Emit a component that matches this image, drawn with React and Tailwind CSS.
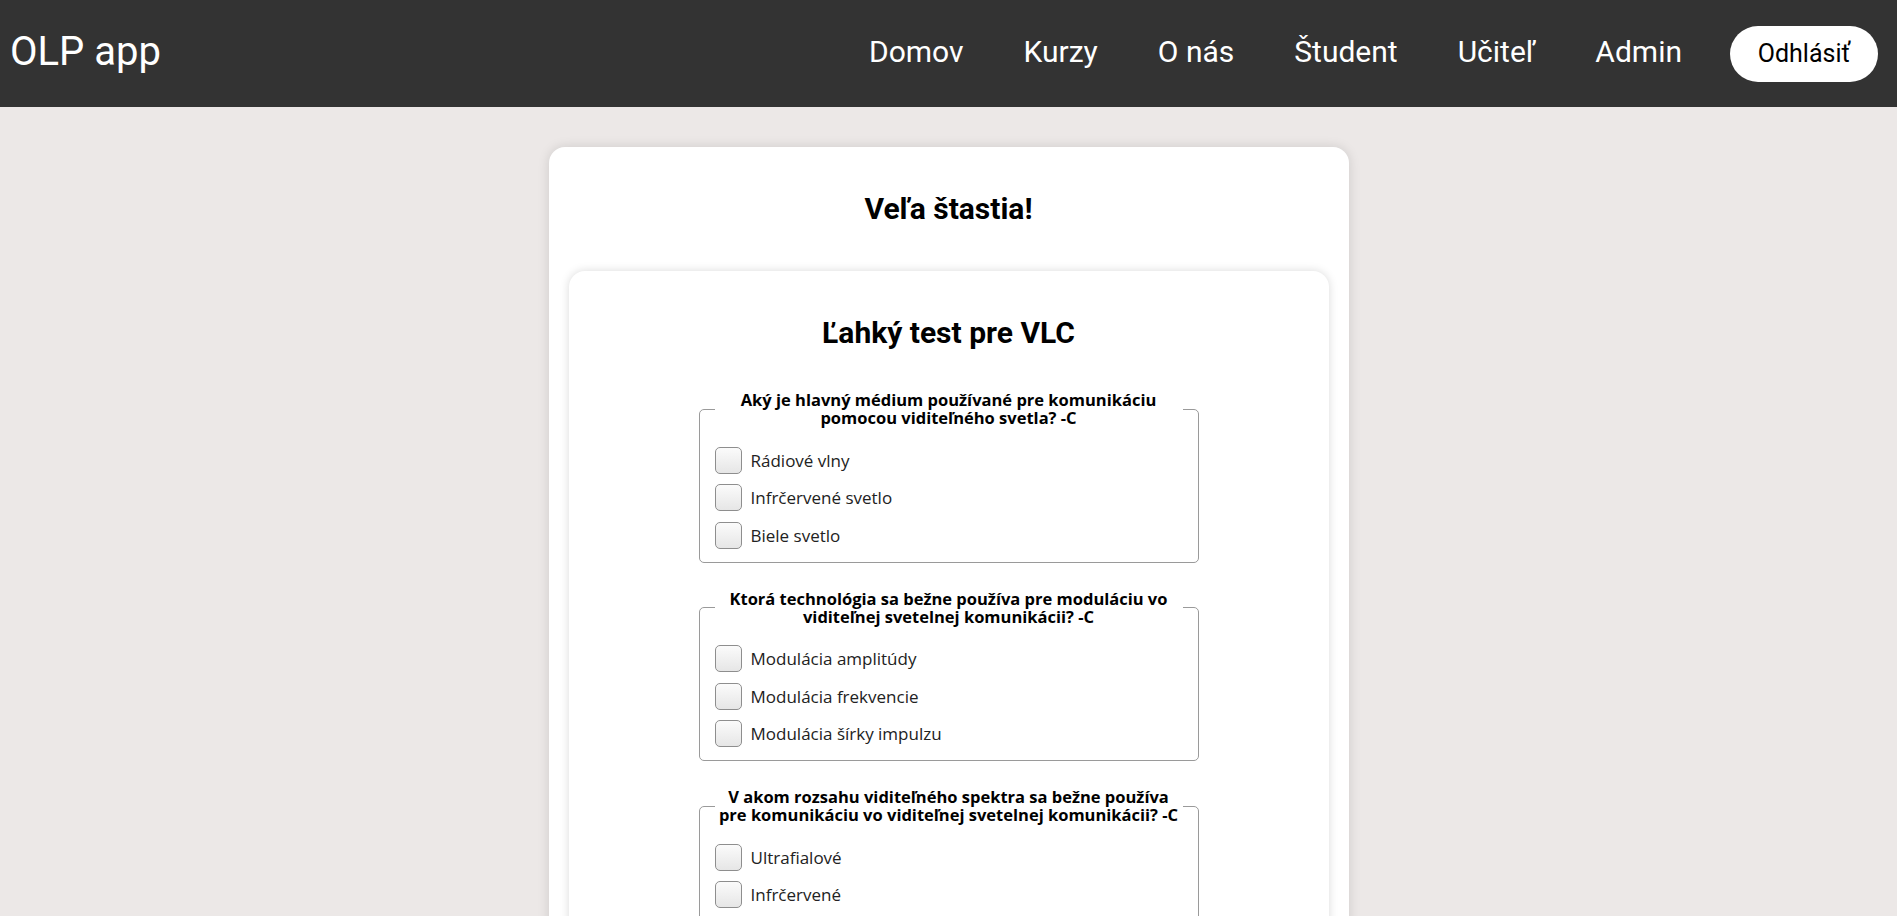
const questions = [
  {
    q: "Aký je hlavný médium používané pre komunikáciu pomocou viditeľného svetla? -C",
    options: ["Rádiové vlny", "Infrčervené svetlo", "Biele svetlo"],
  },
  {
    q: "Ktorá technológia sa bežne používa pre moduláciu vo viditeľnej svetelnej komunikácii? -C",
    options: ["Modulácia amplitúdy", "Modulácia frekvencie", "Modulácia šírky impulzu"],
  },
  {
    q: "V akom rozsahu viditeľného spektra sa bežne používa pre komunikáciu vo viditeľnej svetelnej komunikácii? -C",
    options: ["Ultrafialové", "Infrčervené", "Viditeľné"],
  },
];

function Question({ q, options }) {
  return (
    <fieldset className="border border-[#9a9a9a] rounded-[5px] px-[15px] pb-[13px]">
      <legend className="w-full text-center text-[16.5px] leading-[18.3px] font-bold text-black">
        {q}
      </legend>
      <div className="pt-[19px] flex flex-col gap-[10.5px]">
        {options.map((o) => (
          <label key={o} className="flex items-center gap-[9px] cursor-pointer">
            <input
              type="checkbox"
              className="appearance-none w-[27px] h-[27px] rounded-[5px] border border-[#8e8e8e] bg-linear-to-b from-[#fbfbfb] to-[#e6e6e6] shrink-0 m-0"
            />
            <span className="text-[17px] leading-[24px] text-[#222222] pt-[1px]">{o}</span>
          </label>
        ))}
      </div>
    </fieldset>
  );
}

export default function App() {
  const links = ["Domov", "Kurzy", "O nás", "Študent", "Učiteľ", "Admin"];
  return (
    <div className="min-h-screen bg-[#ece8e7] font-['Roboto',sans-serif]">
      <header className="h-[107px] bg-[#333333] flex items-center justify-between pl-[10px] pr-[19px]">
        <div className="text-white text-[40px] leading-none pb-[3px]">OLP app</div>
        <nav className="flex items-center">
          <div className="flex items-center gap-[60px] text-white text-[30px] leading-none pb-[4px]">
            {links.map((l) => (
              <a key={l} href="#" className="text-white">
                {l}
              </a>
            ))}
          </div>
          <button className="ml-[48px] w-[148px] h-[56px] rounded-full bg-white text-black text-[25px] leading-none flex items-center justify-center">
            Odhlásiť
          </button>
        </nav>
      </header>
      <main className="pt-[40px] pb-[40px]">
        <div className="mx-auto w-[800px] bg-white rounded-[16px] shadow-[0_0_12px_rgba(0,0,0,0.13)] px-[20px] pt-[44px] pb-[20px]">
          <h1 className="text-center text-[30px] font-bold leading-[35px] text-black">Veľa štastia!</h1>
          <div className="mt-[45px] bg-white rounded-[16px] shadow-[0_0_10px_rgba(0,0,0,0.15)] pt-[44px] pb-[40px]">
            <h2 className="text-center text-[30px] font-bold leading-[35px] text-black">Ľahký test pre VLC</h2>
            <div className="mt-[41px] w-[500px] mx-auto flex flex-col gap-[27px] font-['Open_Sans',sans-serif]">
              {questions.map((item) => (
                <Question key={item.q} q={item.q} options={item.options} />
              ))}
            </div>
          </div>
        </div>
      </main>
    </div>
  );
}
